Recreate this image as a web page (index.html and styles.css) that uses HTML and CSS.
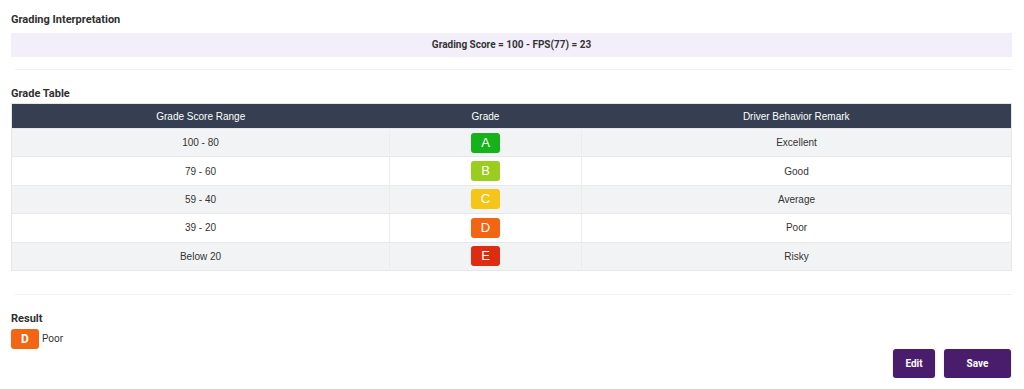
FILE: index.html
```html
<!DOCTYPE html>
<html>
<head>
<meta charset="utf-8">
<link rel="stylesheet" href="styles.css">
</head>
<body>
<div class="page">
  <h2 class="title t-first">Grading Interpretation</h2>
  <div class="formula">Grading Score = 100 - FPS(77) = 23</div>
  <div class="divider"></div>

  <h2 class="title t-table">Grade Table</h2>
  <table class="grades">
    <thead>
      <tr><th class="c1">Grade Score Range</th><th class="c2">Grade</th><th class="c3">Driver Behavior Remark</th></tr>
    </thead>
    <tbody>
      <tr><td>100 - 80</td><td><span class="badge ga">A</span></td><td>Excellent</td></tr>
      <tr><td>79 - 60</td><td><span class="badge gb">B</span></td><td>Good</td></tr>
      <tr><td>59 - 40</td><td><span class="badge gc">C</span></td><td>Average</td></tr>
      <tr><td>39 - 20</td><td><span class="badge gd">D</span></td><td>Poor</td></tr>
      <tr><td>Below 20</td><td><span class="badge ge">E</span></td><td>Risky</td></tr>
    </tbody>
  </table>
  <div class="divider d2"></div>

  <h2 class="title t-result">Result</h2>
  <div class="result">
    <span class="badge gd big">D</span>
    <span class="result-text">Poor</span>
  </div>
  <div class="actions">
    <button class="btn btn-edit">Edit</button>
    <button class="btn btn-save">Save</button>
  </div>
</div>
</body>
</html>
```
FILE: styles.css
```css
* { box-sizing: border-box; }
html, body { margin: 0; padding: 0; background: #fff; }
body { font-family: Roboto, "Liberation Sans", Arial, sans-serif; color: #333; }
.page { padding: 0 12px 0 11px; }

.title {
  margin: 0;
  font-family: Roboto, sans-serif;
  font-weight: 700;
  font-size: 11px;
  line-height: 14px;
  color: #2f2f2f;
}
.t-first { padding-top: 13px; }
.t-table { margin-top: 17px; }
.t-result { margin-top: 17px; }

.formula {
  margin-top: 6px;
  height: 24px;
  line-height: 24px;
  background: #f3effa;
  text-align: center;
  font-family: Roboto, sans-serif;
  font-weight: 700;
  font-size: 10px;
  color: #333;
}

.divider {
  margin: 12px 0 0 4px;
  height: 1px;
  background: #f1f1f1;
}
.d2 { margin-top: 23px; }

.grades {
  margin-top: 2px;
  width: 100%;
  border-collapse: collapse;
  font-family: "Liberation Sans", Arial, sans-serif;
  font-size: 10px;
  border: 1px solid #e7e7e7;
}
.grades th {
  background: #353f51;
  color: #fff;
  font-family: "Liberation Sans", Arial, sans-serif;
  font-weight: 400;
  font-size: 10px;
  height: 25px;
  padding: 0;
  text-align: center;
}
.grades .c1 { width: 378px; }
.grades .c2 { width: 192px; }
.grades td {
  height: 28.4px;
  padding: 0;
  text-align: center;
  color: #333;
  font-family: "Liberation Sans", Arial, sans-serif;
  font-size: 10px;
  border-top: 1px solid #e8e8e8;
  border-right: 1px solid #ececec;
}
.grades td:last-child { border-right: none; }
.grades tbody tr:nth-child(odd) td { background: #f2f3f4; }
.grades tbody tr:nth-child(even) td { background: #fff; }

.badge {
  display: inline-block;
  width: 29px;
  height: 20px;
  line-height: 20px;
  border-radius: 3px;
  color: #fff;
  font-family: "Liberation Sans", Arial, sans-serif;
  font-size: 13px;
  text-align: center;
  vertical-align: middle;
}
.ga { background: #17b11c; }
.gb { background: #9acd1e; }
.gc { background: #f6c51a; }
.gd { background: #f26513; }
.ge { background: #dc2c12; }

.result {
  display: flex;
  align-items: center;
  gap: 3px;
  margin-top: 3px;
}
.badge.big {
  width: 28px;
  font-family: Roboto, sans-serif;
  font-weight: 700;
  font-size: 12px;
}
.result-text {
  font-family: Roboto, sans-serif;
  font-size: 10px;
  color: #333;
}

.actions {
  display: flex;
  justify-content: flex-end;
  gap: 9px;
  padding-right: 1px;
}
.btn {
  height: 29px;
  border: none;
  border-radius: 3px;
  background: #4a1d6c;
  color: #fff;
  font-family: Roboto, sans-serif;
  font-weight: 700;
  font-size: 10px;
  padding: 0;
  box-shadow: 0 1px 2px rgba(0,0,0,0.2);
}
.btn-edit { width: 42px; }
.btn-save { width: 67px; }
```
